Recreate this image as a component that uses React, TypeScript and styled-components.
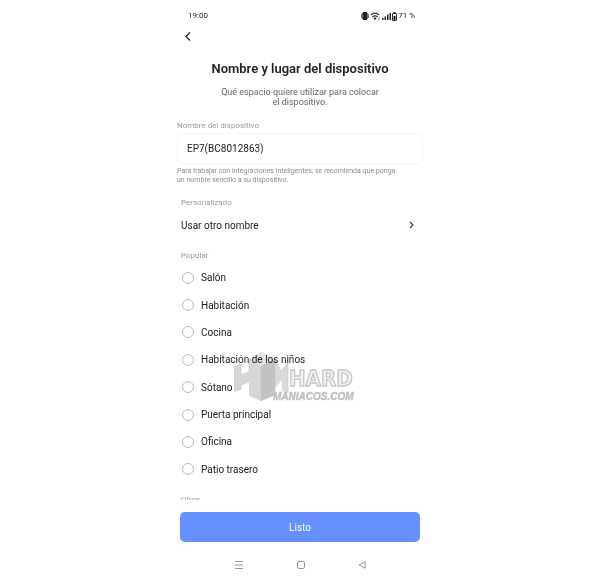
import React from "react";
import styled, { createGlobalStyle } from "styled-components";

const GlobalStyle = createGlobalStyle`
  * { box-sizing: border-box; }
  body {
    margin: 0;
    background: #fff;
    font-family: Roboto, sans-serif;
    color: #222;
  }
  button, input { font: inherit; color: inherit; }
`;

const Screen = styled.main`
  display: flex;
  flex-direction: column;
  width: 100%;
  max-width: 246px;
  height: 100vh;
  margin: 0 auto;
`;

const StatusBar = styled.header`
  display: flex;
  align-items: center;
  justify-content: space-between;
  height: 12px;
  margin: 10px 8px 0 11px;
  font-size: 8px;
  line-height: 12px;
`;

const StatusIcons = styled.div`
  display: flex;
  align-items: center;
  gap: 1px;
  svg { display: block; }
`;

const BackButton = styled.button`
  align-self: flex-start;
  display: flex;
  margin: 8px 0 0 4px;
  padding: 2px 4px;
  border: 0;
  background: none;
`;

const Title = styled.h1`
  margin: 17px 0 0;
  font-size: 13px;
  line-height: 18px;
  font-weight: 600;
  text-align: center;
`;

const Subtitle = styled.p`
  width: 164px;
  margin: 9px auto 0;
  font-size: 9px;
  line-height: 10px;
  text-align: center;
  color: #666;
`;

const FieldLabel = styled.label`
  margin-top: 14px;
  font-size: 8px;
  line-height: 10px;
  color: #999;
`;

const NameInput = styled.input`
  width: 100%;
  height: 31px;
  margin-top: 2px;
  padding: 0 9px;
  border: 1px solid #f5f5f5;
  border-radius: 4px;
  background: #fff;
  font-size: 10px;
`;

const Hint = styled.p`
  max-width: 224px;
  margin: 3px 0 0;
  font-size: 7px;
  line-height: 9px;
  color: #8c8c8c;
`;

const Options = styled.div`
  flex: 1;
  min-height: 0;
  padding: 0 4px;
  overflow: hidden;
`;

const SectionTitle = styled.h2<{ $gap: number }>`
  margin: ${(p) => p.$gap}px 0 0;
  font-size: 8px;
  line-height: 10px;
  font-weight: 400;
  color: #999;
`;

const LinkRow = styled.button`
  display: flex;
  align-items: center;
  justify-content: space-between;
  width: 100%;
  height: 34px;
  padding: 0 5px 0 0;
  border: 0;
  background: none;
  font-size: 10px;
`;

const RoomList = styled.div`
  display: grid;
  grid-auto-rows: 1fr;
  height: 219px;
  margin-top: 3px;
`;

const RoomRow = styled.label`
  display: flex;
  align-items: center;
  gap: 7px;
  font-size: 10px;
`;

const Radio = styled.input`
  appearance: none;
  width: 12px;
  height: 12px;
  margin: 0 0 0 1px;
  border: 1px solid #bbb;
  border-radius: 50%;
  &:checked { border: 4px solid #668fff; }
`;

const DoneButton = styled.button`
  flex: none;
  height: 30px;
  margin: 12px 3px 0;
  border: 0;
  border-radius: 5px;
  background: #668fff;
  color: #fff;
  font-size: 10px;
`;

const NavBar = styled.nav`
  display: flex;
  justify-content: space-between;
  margin: 13px 51px 3px 52px;
`;

const NavButton = styled.button`
  display: flex;
  align-items: center;
  justify-content: center;
  width: 20px;
  height: 20px;
  padding: 0;
  border: 0;
  background: none;
`;

const ListArea = styled.div`
  position: relative;
`;

const Watermark = styled.svg`
  position: absolute;
  left: 52px;
  top: 86px;
  width: 124px;
  height: 56px;
  pointer-events: none;
  mix-blend-mode: multiply;
`;

const rooms = [
  "Salón",
  "Habitación",
  "Cocina",
  "Habitación de los niños",
  "Sótano",
  "Puerta principal",
  "Oficina",
  "Patio trasero",
];

function BrandMark() {
  return (
    <Watermark viewBox="0 0 124 56" aria-hidden="true">
      <path d="M1 17l7-3v11l8-3V9l12-7 14 7v36l-14 6-12-5V32l-8 3v5l-7 2z" fill="#d6d6d6" />
      <path d="M16 9l12-7 14 7-14 7z" fill="#e2e2e2" />
      <path d="M28 16l14-7v36l-14 6z" fill="#c2c2c2" />
      <path d="M42 9l6 12 7-8v30l-6-2V30l-7 8z" fill="#dadada" />
      <path d="M1 17l7-3v11l8-3V9M16 32l-8 3v5M28 16v35M42 9v36M42 9l6 12 7-8v30" fill="none" stroke="#c6c6c6" strokeWidth="0.7" />
      <text x="56" y="36" fontFamily="'DejaVu Sans Condensed', 'DejaVu Sans', sans-serif" fontWeight="700" fontSize="22" fill="#f2f2f2" stroke="#c6c6c6" strokeWidth="1.3">HARD</text>
      <text x="40" y="50" fontFamily="'Liberation Sans', sans-serif" fontWeight="700" fontStyle="italic" fontSize="10" fill="#bababa" stroke="#c4c4c4" strokeWidth="0.4">MANIACOS.COM</text>
    </Watermark>
  );
}

function VibrateIcon() {
  return (
    <svg width="8" height="8" viewBox="0 0 8 8">
      <path d="M2 0h4v8H2z" fill="#222" />
      <path d="M0 2h1v4H0zM7 2h1v4H7zM1 1h1v6H1zM6 1h1v6H6z" fill="#777" />
    </svg>
  );
}

function WifiIcon() {
  return (
    <svg width="11" height="9" viewBox="0 0 11 9">
      <path d="M.8 3.2Q5 -1 9.2 3.2M2.4 5Q5 2.6 7.6 5" fill="none" stroke="#333" strokeWidth="1.2" />
      <path d="M3.4 6.2Q5 4.8 6.6 6.2L5 8z" fill="#222" />
      <path d="M9 5.5v3" stroke="#777" />
    </svg>
  );
}

function SignalIcon() {
  return (
    <svg width="9" height="8" viewBox="0 0 9 8">
      <path d="M0 6h1.5v2H0zM2.5 4.5H4V8H2.5zM5 2.5h1.5V8H5zM7.5 1H9v7H7.5z" fill="#222" />
    </svg>
  );
}

function BatteryIcon() {
  return (
    <svg width="5" height="9" viewBox="0 0 5 9">
      <path d="M1.5 0h2v1h-2z" fill="#222" />
      <rect x=".5" y="1.5" width="4" height="7" rx=".5" fill="none" stroke="#333" />
      <path d="M1.5 4h2v4h-2z" fill="#222" />
    </svg>
  );
}

export default function App() {
  return (
    <>
      <GlobalStyle />
      <Screen>
        <StatusBar>
          <span>19:00</span>
          <StatusIcons>
            <VibrateIcon />
            <WifiIcon />
            <SignalIcon />
            <BatteryIcon />
            <span>71 %</span>
          </StatusIcons>
        </StatusBar>
        <BackButton aria-label="Atrás">
          <svg width="6" height="9" viewBox="0 0 6 9"><path d="M5 .5l-4 4 4 4" fill="none" stroke="#222" strokeWidth="1.2" /></svg>
        </BackButton>
        <Title>Nombre y lugar del dispositivo</Title>
        <Subtitle>Qué espacio quiere utilizar para colocar el dispositivo.</Subtitle>
        <FieldLabel htmlFor="device-name">Nombre del dispositivo</FieldLabel>
        <NameInput id="device-name" defaultValue="EP7(BC8012863)" />
        <Hint>Para trabajar con integraciones inteligentes, se recomienda que ponga un nombre sencillo a su dispositivo.</Hint>
        <Options>
          <SectionTitle $gap={13}>Personalizado</SectionTitle>
          <LinkRow>
            Usar otro nombre
            <svg width="5" height="8" viewBox="0 0 5 8"><path d="M1 1l3 3-3 3" fill="none" stroke="#444" strokeWidth="1.2" /></svg>
          </LinkRow>
          <SectionTitle $gap={9}>Popular</SectionTitle>
          <ListArea>
            <RoomList>
              {rooms.map((room) => (
                <RoomRow key={room}>
                  <Radio type="radio" name="room" value={room} />
                  {room}
                </RoomRow>
              ))}
            </RoomList>
            <BrandMark />
          </ListArea>
          <SectionTitle $gap={12}>Otros</SectionTitle>
        </Options>
        <DoneButton>Listo</DoneButton>
        <NavBar>
          <NavButton aria-label="Recientes"><svg width="8" height="8" viewBox="0 0 8 8"><path d="M0 .5h8M0 4h8M0 7.5h8" stroke="#999" /></svg></NavButton>
          <NavButton aria-label="Inicio"><svg width="8" height="8" viewBox="0 0 8 8"><rect x=".5" y=".5" width="7" height="7" rx="1.5" fill="none" stroke="#999" /></svg></NavButton>
          <NavButton aria-label="Volver"><svg width="8" height="8" viewBox="0 0 8 8"><path d="M7.2.8v6.4L1 4z" fill="none" stroke="#999" /></svg></NavButton>
        </NavBar>
      </Screen>
    </>
  );
}
